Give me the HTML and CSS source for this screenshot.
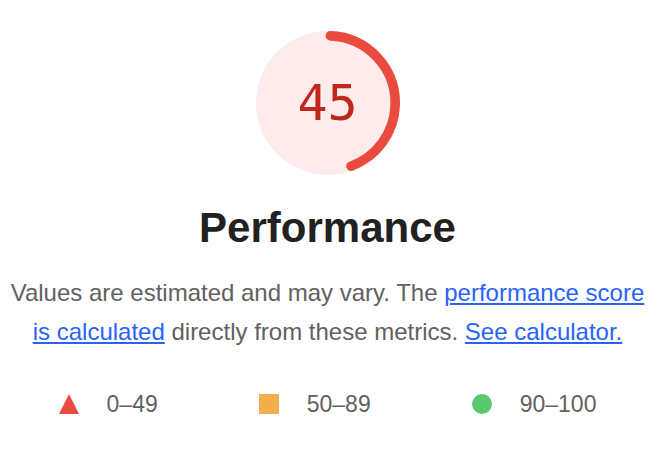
FILE: index.html
```html
<!DOCTYPE html>
<html lang="en">
<head>
    <meta charset="UTF-8">
    <meta name="viewport" content="width=device-width, initial-scale=1.0">
    <title>Performance</title>
    <link rel="stylesheet" href="styles.css">
</head>
<body>
    <div class="category">
        <div class="gauge">
            <svg class="gauge-svg" viewBox="0 0 144 144" width="144" height="144">
                <circle class="gauge-base" cx="72" cy="72" r="72"></circle>
                <circle class="gauge-arc" cx="72" cy="72" r="67.2" stroke-dasharray="185 423" transform="rotate(-88 72 72)"></circle>
            </svg>
            <div class="gauge-value">45</div>
        </div>

        <h2 class="category-title">Performance</h2>

        <p class="category-desc">Values are estimated and may vary. The <a href="#">performance score is calculated</a> directly from these metrics. <a href="#">See calculator.</a></p>

        <div class="scorescale">
            <span class="range range-fail">0–49</span>
            <span class="range range-average">50–89</span>
            <span class="range range-pass">90–100</span>
        </div>
    </div>
</body>
</html>
```

FILE: styles.css
```css
body {
    margin: 0;
    background: #fff;
    font-family: "Liberation Sans", Arial, sans-serif;
}

.category {
    width: 655px;
    padding-top: 31px;
    text-align: center;
}

.gauge {
    position: relative;
    width: 144px;
    height: 144px;
    margin: 0 auto;
}

.gauge-svg {
    display: block;
}

.gauge-base {
    fill: #fdeceb;
}

.gauge-arc {
    fill: none;
    stroke: #eb4a3f;
    stroke-width: 9.6;
    stroke-linecap: round;
}

.gauge-value {
    position: absolute;
    inset: 0;
    display: flex;
    align-items: center;
    justify-content: center;
    font-family: "DejaVu Sans Mono", monospace;
    font-size: 50px;
    color: #c0271d;
}

.category-title {
    margin: 29px 0 0;
    font-size: 42px;
    line-height: 48px;
    font-weight: bold;
    color: #212121;
}

.category-desc {
    margin: 21px 0 0;
    padding: 0 8px;
    font-size: 24px;
    line-height: 39px;
    color: #616161;
}

.category-desc a {
    color: #2962ff;
}

.scorescale {
    display: flex;
    justify-content: center;
    gap: 101px;
    margin-top: 40px;
    font-size: 23px;
    line-height: 26px;
    color: #616161;
}

.range {
    display: flex;
    align-items: center;
}

.range::before {
    content: "";
    width: 20px;
    height: 20px;
    margin-right: 28px;
}

.range-fail::before {
    width: 0;
    height: 0;
    border-left: 10px solid transparent;
    border-right: 10px solid transparent;
    border-bottom: 20px solid #eb4a3f;
}

.range-average::before {
    background: #f2ad4d;
}

.range-pass::before {
    border-radius: 50%;
    background: #5bc76f;
}
```
